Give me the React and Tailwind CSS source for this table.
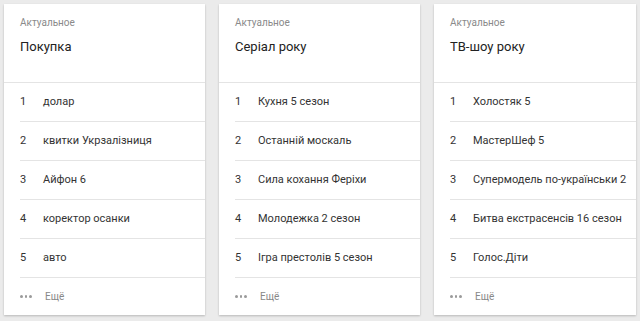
import React from "react";

const cards = [
  {
    title: "Покупка",
    items: ["долар", "квитки Укрзалізниця", "Айфон 6", "коректор осанки", "авто"],
  },
  {
    title: "Серіал року",
    items: ["Кухня 5 сезон", "Останній москаль", "Сила кохання Феріхи", "Молодежка 2 сезон", "Ігра престолів 5 сезон"],
  },
  {
    title: "ТВ-шоу року",
    items: ["Холостяк 5", "МастерШеф 5", "Супермодель по-українськи 2", "Битва екстрасенсів 16 сезон", "Голос.Діти"],
  },
];

function Card({ card, w }) {
  return (
    <div
      className={`${w} h-[311px] shrink-0 bg-white flex flex-col shadow-[0_1px_2px_rgba(0,0,0,0.22)]`}
    >
      <div className="h-[79px] border-b border-[#e4e4e4] pl-4 pt-[12px] flex flex-col">
        <div className="text-[10px] leading-[14px] text-[#8a8a8a]">Актуальное</div>
        <div className="mt-[8px] text-[13px] leading-[18px] text-[#222]">{card.title}</div>
      </div>
      {card.items.map((it, i) => (
        <div
          key={i}
          className="ml-4 h-[39px] border-b border-[#e4e4e4] flex items-center text-[11px] text-[#333]"
        >
          <span className="w-[23px]">{i + 1}</span>
          <span>{it}</span>
        </div>
      ))}
      <div className="flex-1 pl-4 flex items-center">
        <div className="flex gap-[2px] w-[25px]">
          <span className="w-[2.5px] h-[2.5px] rounded-full bg-[#9a9a9a]" />
          <span className="w-[2.5px] h-[2.5px] rounded-full bg-[#9a9a9a]" />
          <span className="w-[2.5px] h-[2.5px] rounded-full bg-[#9a9a9a]" />
        </div>
        <span className="text-[10px] text-[#888]">Ещё</span>
      </div>
    </div>
  );
}

export default function App() {
  return (
    <div
      className="w-[640px] h-[321px] bg-[#ebebeb] pt-[4px] pl-[4px] flex gap-[14px] overflow-hidden"
      style={{ fontFamily: "Roboto, 'Noto Sans', sans-serif" }}
    >
      <Card card={cards[0]} w="w-[201px]" />
      <Card card={cards[1]} w="w-[201px]" />
      <Card card={cards[2]} w="w-[202px]" />
    </div>
  );
}
